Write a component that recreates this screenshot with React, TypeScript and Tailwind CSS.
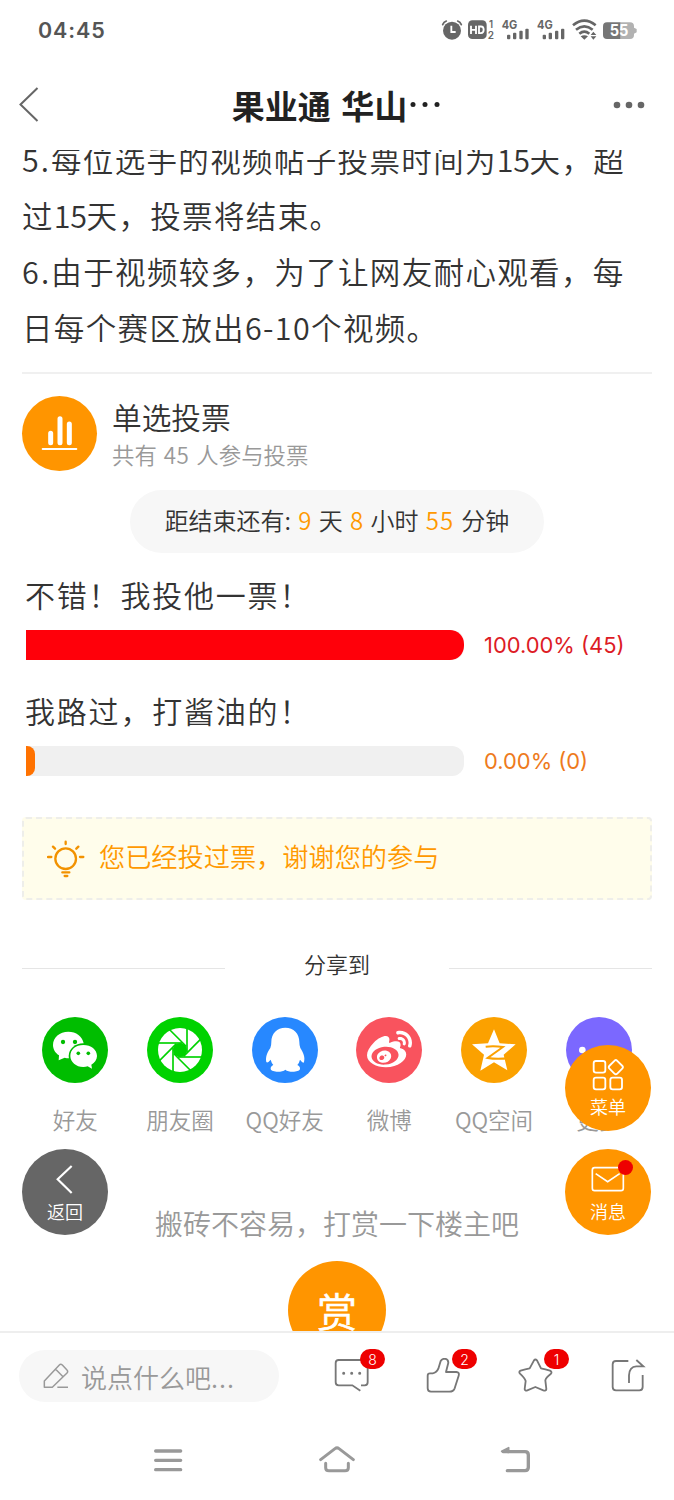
import React from "react";
import { FaWeibo } from "react-icons/fa";

function StatusIcons() {
  const bars = [
    [0, 74],
    [18, 68],
    [37, 62],
    [55, 56],
  ];
  return (
    <svg width="220" height="40" viewBox="0 0 660 120" fill="#666">
      <circle cx="66" cy="62" r="27" />
      <path d="M38 44Q41 36 49 33M94 44Q91 36 83 33" fill="none" stroke="#666" strokeWidth="5" strokeLinecap="round" />
      <path d="M64 47V66H77" fill="none" stroke="#fff" strokeWidth="5.5" />
      <rect x="114" y="31" width="56" height="56" rx="13" />
      <path d="M123 47V72M138 47V72M123 59.500H138M147 49.500V69.500H153Q161 69 161 59.500Q161 49.500 153 49.500H147Z" fill="none" stroke="#fff" strokeWidth="5.5" />
      <g fontFamily="Inter, sans-serif" fontWeight="700">
        <text x="177" y="53" fontSize="29" fontWeight="600">1</text>
        <text x="173" y="88" fontSize="30" fontWeight="600">2</text>
        <text x="215" y="57" fontSize="35" textLength="47" lengthAdjust="spacingAndGlyphs">4G</text>
        <text x="321" y="57" fontSize="35" textLength="47" lengthAdjust="spacingAndGlyphs">4G</text>
      </g>
      {[231, 338].map((x) =>
        bars.map(([dx, y]) => <rect key={x + dx} x={x + dx} y={y} width="10" height={88 - y} rx="3" />)
      )}
      <g fill="none" stroke="#666" strokeWidth="8">
        <path d="M429 46Q463 18 497 46" />
        <path d="M438 59Q463 39 488 59" />
        <path d="M448 71Q463 59 478 71" />
      </g>
      <path d="M452 79Q463 72 474 79L463 89ZM490 65L499 75H482ZM490 89L499 79H482Z" />
      <path d="M531 37H572V87H531Q519 87 519 75V49Q519 37 531 37Z" fill="#767676" />
      <path d="M572 37H600Q612 37 612 49V53L620 57V67L612 71V75Q612 87 600 87H572Z" fill="#b2b2b2" />
      <text x="539" y="79" fill="#fff" fontFamily="Inter, sans-serif" fontWeight="700" fontSize="46" textLength="56" lengthAdjust="spacingAndGlyphs">55</text>
    </svg>
  );
}

const WechatIcon = () => (
  <svg className="size-[66px]" viewBox="66 52 198 198">
    <path fill="#fff" d="M145 96C119 96 99 113 99 136C99 149 106 160 117 167L116 182L134 174Q146 177 158 174C188 172 192 148 191 131C188 110 168 96 145 96Z" />
    <ellipse cx="190" cy="169" rx="44" ry="38" fill="#00bd00" />
    <path fill="#fff" d="M190 136C167 136 151 150 151 169C151 187 168 202 190 202Q197 202 203 200L216 207L214 195C224 189 231 180 231 169C231 150 213 136 190 136Z" />
    <g fill="#00bd00">
      <circle cx="129" cy="127" r="6.500" />
      <circle cx="165" cy="127" r="6.500" />
      <circle cx="175" cy="161" r="5.500" />
      <circle cx="205" cy="161" r="5.500" />
    </g>
  </svg>
);

const MomentsIcon = () => (
  <svg className="size-[66px]" viewBox="-99 -99 198 198">
    <circle r="66" fill="#fff" />
    <circle r="21" fill="#00d200" />
    <g stroke="#00d200" strokeWidth="5">
      {[0, 45, 90, 135, 180, 225, 270, 315].map((a) => (
        <path key={a} transform={`rotate(${a})`} d="M-21 -6V68" />
      ))}
    </g>
  </svg>
);

const QQIcon = () => (
  <svg className="size-[66px]" viewBox="695 52 198 198">
    <path
      fill="#fff"
      d="M795 84C770 84 753 101 753 127Q753 138 750 145C740 158 735 174 738 187Q741 192 751 180Q753 189 759 196Q750 200 751 208C754 218 785 219 795 210C805 219 836 218 839 208Q840 200 831 196Q837 189 839 180Q849 193 851 187C855 174 849 158 840 145Q837 138 837 127C837 101 820 84 795 84Z"
    />
  </svg>
);

const QzoneIcon = () => (
  <svg className="size-[66px]" viewBox="365 52 198 198">
    <path fill="#fff" d="M464 89L481 131L529 134L493 165L504 212L464 188L423 213L434 165L398 134L446 131Z" />
    <path fill="none" stroke="#fba100" strokeWidth="6" d="M439 141Q464 138 491 142L445 175Q475 180 510 175" />
  </svg>
);

const MoreIcon = () => (
  <svg className="size-[66px]" viewBox="680 52 198 198" fill="#fff">
    <circle cx="729" cy="151" r="10" />
    <circle cx="779" cy="151" r="10" />
    <circle cx="829" cy="151" r="10" />
  </svg>
);

const shares = [
  { label: "好友", color: "bg-[#00bd00]", icon: <WechatIcon /> },
  { label: "朋友圈", color: "bg-[#00d200]", icon: <MomentsIcon /> },
  { label: "QQ好友", color: "bg-[#2788ff]", icon: <QQIcon /> },
  { label: "微博", color: "bg-[#f9535e]", icon: <FaWeibo className="size-[45px] text-white" /> },
  { label: "QQ空间", color: "bg-[#fba100]", icon: <QzoneIcon /> },
  { label: "更多", color: "bg-[#7b68ff]", icon: <MoreIcon /> },
];

function PollOption({ title, percent, count, bar, text, width }: {
  title: string; percent: string; count: number; bar: string; text: string; width: string;
}) {
  return (
    <div className="h-[116px] pl-[26px]">
      <div className="-ml-px h-[54px] text-[30px] leading-[36px] tracking-[1.8px] whitespace-nowrap">{title}</div>
      <div className="flex h-[30px] items-center">
        <div className="h-[30px] w-[438px] overflow-hidden rounded-r-[12px] bg-[#f0f0f0]">
          <div className={`h-full ${bar} ${width}`} />
        </div>
        <div className={`mt-px ml-[20px] font-[Inter,sans-serif] text-[21.900px] font-normal whitespace-nowrap ${text}`}>
          {percent}% ({count})
        </div>
      </div>
    </div>
  );
}

function Action({ count, children }: { count?: number; children: React.ReactNode }) {
  return (
    <div className="relative size-[36px]">
      {children}
      {count !== undefined && (
        <span className="absolute -top-[9px] left-[26px] flex h-5 w-[25px] items-center justify-center rounded-full bg-[#ee0000] font-[Inter,sans-serif] text-[14px] font-light text-white">
          {count}
        </span>
      )}
    </div>
  );
}

export default function App() {
  return (
    <div lang="zh-CN" className="relative flex h-[1500px] w-[674px] flex-col overflow-hidden bg-white font-['Noto_Sans_CJK_SC',sans-serif] font-[350] text-[#333]">
      <div className="flex h-[60px] shrink-0 justify-between pt-[10px] pr-6 pl-[38px]">
        <span className="font-[Inter,sans-serif] text-[21.500px] leading-[41px] font-semibold tracking-[0.9px] text-[#555]">04:45</span>
        <StatusIcons />
      </div>

      <header className="flex h-[90px] shrink-0 items-center justify-between pr-[29px] pl-[19px]">
        <svg width="34" height="40" viewBox="0 0 34 40" fill="none" stroke="#666" strokeWidth="2">
          <path d="M18.500 3L1.500 19.500L18.500 36" />
        </svg>
        <h1 className="ml-[10px] flex text-[33px] leading-[40px] font-bold whitespace-nowrap text-[#222] [word-spacing:3px]">
          果业通 华山
          <svg className="ml-0.5" width="33" height="40" fill="#222">
            <circle cx="4" cy="19.500" r="2.500" />
            <circle cx="16" cy="19.500" r="2.500" />
            <circle cx="28" cy="19.500" r="2.500" />
          </svg>
        </h1>
        <svg width="34" height="10" fill="#666">
          <circle cx="6" cy="5" r="3.300" />
          <circle cx="18" cy="5" r="3.300" />
          <circle cx="30" cy="5" r="3.300" />
        </svg>
      </header>

      <main className="h-[1181px] shrink-0 overflow-hidden">
        <div className="-mt-[19px] h-[225px] pl-[22px] text-[30.500px] leading-[56px] tracking-[1.35px] whitespace-nowrap">
          <p><span className="tracking-[2px]">5.</span>每位选手的视频帖子投票时间为<span className="tracking-[-0.4px]">15</span>天，超</p>
          <p>过<span className="tracking-[-0.4px]">15</span>天，投票将结束。</p>
          <p><span className="tracking-[2.2px]">6.</span>由于视频较多，为了让网友耐心观看，每</p>
          <p>日每个赛区放出6-10个视频。</p>
        </div>
        <div className="mx-[22px] mt-4 h-0.5 bg-[#f0f0f0]" />

        <div className="mt-[22px] flex h-[75px] pl-[22px]">
          <div className="size-[75px] rounded-full bg-[#ff9500]">
            <svg width="75" height="75" viewBox="67 48 225 225" stroke="#fff" strokeLinecap="round">
              <path d="M153 160V188M181 116V188M209 132V188" strokeWidth="15" />
              <path d="M129 207H230" strokeWidth="6" />
            </svg>
          </div>
          <div className="ml-[15px]">
            <div className="mt-px text-[29.700px] leading-[40px] whitespace-nowrap">单选投票</div>
            <div className="text-[22.400px] leading-[34px] whitespace-nowrap text-[#999] [word-spacing:2px]">共有 <span className="tracking-[0.5px]">45</span> 人参与投票</div>
          </div>
        </div>

        <div className="mx-auto mt-[19px] flex h-[63px] w-[414px] items-center justify-center rounded-full bg-[#f7f7f7] pb-[3px] text-[24px] leading-[60px] whitespace-pre [word-spacing:1.9px]">
          距结束还有: <span className="text-[#f90]">9</span> 天 <span className="text-[#f90]">8</span> 小时 <span className="tracking-[1px] text-[#f90]">55</span> 分钟
        </div>

        <div className="mt-[23px]">
          <PollOption title="不错！我投他一票！" percent="100.00" count={45} bar="bg-[#ff000a] rounded-r-[14px]" width="w-full" text="text-[#dd1b25]" />
          <PollOption title="我路过，打酱油的！" percent="0.00" count={0} bar="bg-[#ff7200] rounded-r-[8px]" width="w-[9px]" text="text-[#ee7a1c]" />
        </div>

        <div className="mx-[22px] mt-[9px] flex h-[83px] items-center rounded-[4px] border-2 border-dashed border-[#eeeeea] bg-[#fffdeb] pl-[23px] text-[26.200px] whitespace-nowrap text-[#f90]">
          <svg width="38" height="38" viewBox="140 119 114 114" fill="none" stroke="#f29200" strokeWidth="7" strokeLinecap="round">
            <circle cx="196" cy="175" r="31" />
            <path d="M196 124V131M143 170H153M239 170H249M158 139L164 145M234 139L228 145M186 216H207M193 227H201" />
          </svg>
          <span className="-mt-[3px] ml-[14px]">您已经投过票，谢谢您的参与</span>
        </div>

        <div className="mx-[22px] mt-[45px] flex h-[40px] items-center justify-between">
          <div className="mt-[7px] h-px w-[203px] bg-[#e5e5e5]" />
          <span className="-mt-[3px] text-[22px]">分享到</span>
          <div className="mt-[7px] h-px w-[203px] bg-[#e5e5e5]" />
        </div>

        <div className="mt-[32px] grid grid-cols-6 pr-[23px] pl-[23px]">
          {shares.map((s) => (
            <div key={s.label} className="flex flex-col items-center">
              <div className={`flex size-[66px] items-center justify-center rounded-full ${s.color}`}>{s.icon}</div>
              <span className="mt-[19px] text-[22.500px] leading-[34px] whitespace-nowrap text-[#999]">{s.label}</span>
            </div>
          ))}
        </div>

        <div className="mt-[67px] text-center text-[28px] leading-[40px] text-[#999]">搬砖不容易，打赏一下楼主吧</div>
        <div className="mx-auto mt-[18px] flex h-[98px] w-[98px] items-center justify-center rounded-full bg-[#ff9500] text-[40px] leading-none text-white [-webkit-text-stroke:0.6px_#fff]">赏</div>
      </main>

      <footer className="flex h-[89px] shrink-0 items-center justify-between border-t-2 border-[#eee] pr-[28px] pb-px pl-[19px]">
        <div className="flex h-[52px] w-[260px] items-center rounded-full bg-[#f7f7f7] pl-[24px] text-[26px] whitespace-nowrap text-[#999]">
          <svg width="26" height="26" viewBox="130 113 78 78" fill="none" stroke="#999" strokeWidth="4.500" strokeLinejoin="round">
            <path d="M134 186V167L179 119Q183 115 188 119L202 134Q206 138 202 143L158 186ZM168 132L190 154M173 186H205" />
          </svg>
          <span className="ml-[12px]">说点什么吧<span className="tracking-[1px]">...</span></span>
        </div>
        <div className="flex gap-[56px]">
          <Action count={8}>
            <svg width="36" height="36" viewBox="43 99 108 108" fill="none" stroke="#777" strokeWidth="5.500">
              <path d="M124 181H135Q144 181 144 172V114Q144 105 135 105H57Q48 105 48 114V172Q48 181 57 181H98L122 197" />
              <path d="M72 145h.1M96 145h.1M120 145h.1" strokeWidth="9" strokeLinecap="round" />
            </svg>
          </Action>
          <Action count={2}>
            <svg width="36" height="36" viewBox="319 99 108 108" fill="none" stroke="#777" strokeWidth="5.500" strokeLinejoin="round">
              <path d="M324 152Q324 145 331 145H339Q351 143 356 131L363 108Q367 101 376 101Q386 103 386 113L379 141H410Q420 142 417 152L405 190Q401 200 389 200H334Q324 200 324 190Z" />
            </svg>
          </Action>
          <Action count={1}>
            <svg width="36" height="36" viewBox="594 99 108 108" fill="none" stroke="#777" strokeWidth="5.500" strokeLinejoin="round">
              <path d="M642 106Q646 101 651 106L663 130Q676 132 690 137Q698 141 692 147Q677 158 676 166L679 192Q678 199 670 196L646 186L622 196Q615 199 614 192L617 168Q614 159 600 146Q595 140 602 137Q616 132 629 130Z" />
            </svg>
          </Action>
          <Action>
            <svg width="36" height="36" viewBox="869 99 108 108" fill="none" stroke="#777" strokeWidth="5.500">
              <path d="M924 108H887Q877 108 877 118V186Q877 196 887 196H957Q967 196 967 186V150M926 174V151Q927 125 948 124H969L948 105" />
            </svg>
          </Action>
        </div>
      </footer>

      <nav className="flex h-[80px] shrink-0 items-center justify-between pt-0.5 pr-[140px] pl-[149px]">
        <svg width="38" height="32" viewBox="448 361 114 96" fill="none" stroke="#999" strokeWidth="10" strokeLinecap="round">
          <path d="M468 379H543M468 407H543M468 435H543" />
        </svg>
        <svg className="-ml-[10px]" width="36" height="32" viewBox="-3 358 108 96" fill="none" stroke="#999" strokeWidth="9" strokeLinecap="round" strokeLinejoin="round">
          <path d="M2 402L45 369Q51 364 57 369L100 402M17 413V426Q17 435 27 435H75Q85 435 85 426V413" />
        </svg>
        <svg width="38" height="32" viewBox="528 358 114 96" fill="none" stroke="#999" strokeWidth="10" strokeLinecap="round">
          <path d="M562 435H615Q625 435 625 425V388Q625 378 615 378H550" />
          <path d="M545 377L566 366V380Z" fill="#999" strokeWidth="5" strokeLinejoin="round" />
        </svg>
      </nav>

      <button className="absolute top-[1149px] left-[22px] flex size-[86px] flex-col items-center rounded-full bg-[#666] text-[18px] leading-[26px] text-white">
        <svg className="mt-[15px]" width="32" height="34" viewBox="147 71 96 102" fill="none" stroke="#fff" strokeWidth="6.500">
          <path d="M215 77L173 117L215 158" />
        </svg>
        返回
      </button>
      <button className="absolute top-[1045px] left-[565px] flex size-[86px] flex-col items-center rounded-full bg-[#ff9500] text-[18px] leading-[26px] text-white">
        <svg className="mt-[14px]" width="32" height="34" viewBox="757 176 96 102" fill="none" stroke="#fff" strokeWidth="5.500" strokeLinejoin="round">
          <rect x="762" y="182" width="35" height="35" rx="7" />
          <rect x="762" y="232" width="35" height="35" rx="7" />
          <rect x="812" y="232" width="35" height="35" rx="7" />
          <rect x="812" y="184" width="33" height="33" rx="6" transform="rotate(45 828.500 200.500)" />
        </svg>
        菜单
      </button>
      <button className="absolute top-[1149px] left-[565px] flex size-[86px] flex-col items-center rounded-full bg-[#ff9500] text-[18px] leading-[26px] text-white">
        <svg className="mt-[15px]" width="34" height="34" viewBox="755 101 102 102" fill="none" stroke="#fff" strokeWidth="5">
          <rect x="759" y="112" width="93" height="69" rx="7" />
          <path d="M769 130L805 154L841 130" />
        </svg>
        消息
        <span className="absolute top-[11px] left-[53px] size-[15px] rounded-full bg-[#ee0000]" />
      </button>
    </div>
  );
}
